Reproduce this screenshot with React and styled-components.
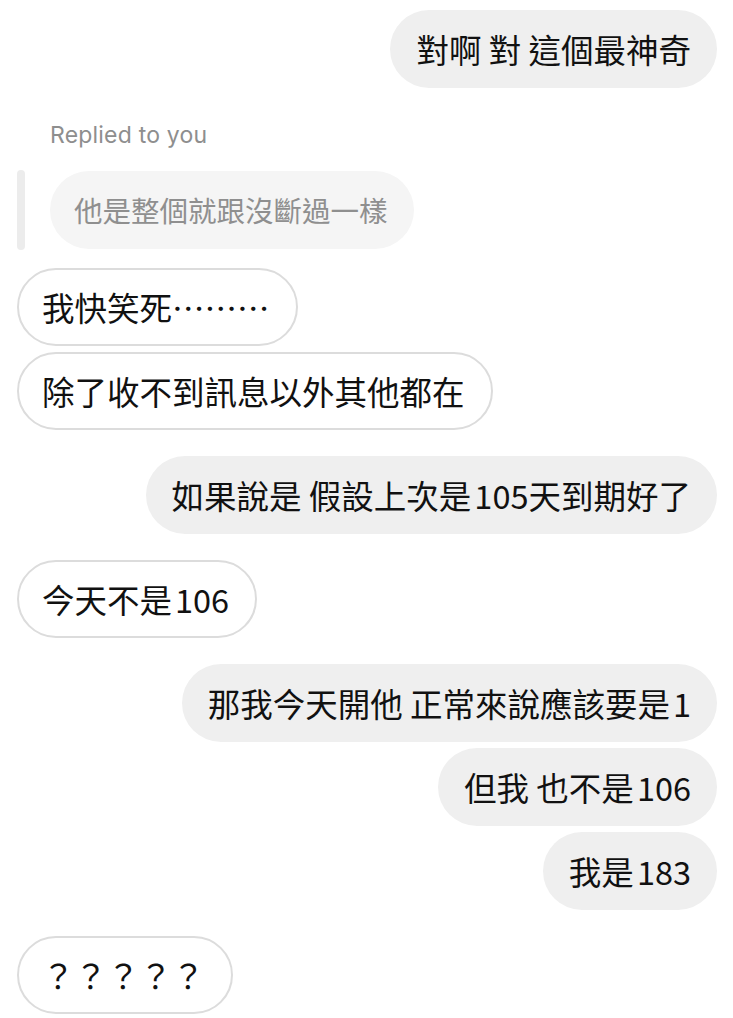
import React from 'react'
import styled, { createGlobalStyle } from 'styled-components'

const GlobalStyle = createGlobalStyle`
  html, body {
    margin: 0;
    padding: 0;
    background: #fff;
  }
  body {
    font-family: "Noto Sans CJK TC", "Noto Sans", sans-serif;
    -webkit-font-smoothing: antialiased;
  }
`

const Thread = styled.main`
  display: flex;
  flex-direction: column;
  gap: 26px;
  width: 733px;
  box-sizing: border-box;
  padding: 10px 16px 0 17px;
`

const Group = styled.section`
  display: flex;
  flex-direction: column;
  align-items: ${p => (p.$mine ? 'flex-end' : 'flex-start')};
  gap: 6px;
`

const Bubble = styled.div`
  display: flex;
  align-items: center;
  box-sizing: border-box;
  height: 78px;
  padding: 0 26px 0 ${p => (p.$mine ? '26px' : '23px')};
  border-radius: 39px;
  background: ${p => (p.$mine ? '#efefef' : '#fff')};
  border: ${p => (p.$mine ? 'none' : '2px solid #dcdcdc')};
  color: #111;
  font-size: 32.5px;
  line-height: 40px;
  white-space: nowrap;
`

const Num = styled.span`
  margin-left: 3px;
`

const ReplyLabel = styled.div`
  margin: 6px 0 0 33px;
  font-family: "Inter", "Liberation Sans", sans-serif;
  font-size: 23px;
  line-height: 30px;
  letter-spacing: 0.2px;
  color: #8e8e8e;
`

const Quote = styled.div`
  display: flex;
  align-items: center;
  gap: 25px;
  margin: 14px 0 12px;
`

const QuoteBar = styled.div`
  width: 8px;
  height: 80px;
  border-radius: 4px;
  background: #ececec;
`

const QuoteBubble = styled.div`
  display: flex;
  align-items: center;
  height: 78px;
  padding: 0 26px 0 24px;
  border-radius: 39px;
  background: #f5f5f5;
  color: #8f8f8f;
  font-size: 28.5px;
  line-height: 36px;
  white-space: nowrap;
`

export default function App() {
  return (
    <>
      <GlobalStyle />
      <Thread>
        <Group $mine>
          <Bubble $mine>對啊 對 這個最神奇</Bubble>
        </Group>
        <Group>
          <ReplyLabel>Replied to you</ReplyLabel>
          <Quote>
            <QuoteBar />
            <QuoteBubble>他是整個就跟沒斷過一樣</QuoteBubble>
          </Quote>
          <Bubble>我快笑死………</Bubble>
          <Bubble>除了收不到訊息以外其他都在</Bubble>
        </Group>
        <Group $mine>
          <Bubble $mine>
            如果說是 假設上次是<Num>105</Num>天到期好了
          </Bubble>
        </Group>
        <Group>
          <Bubble>
            今天不是<Num>106</Num>
          </Bubble>
        </Group>
        <Group $mine>
          <Bubble $mine>
            那我今天開他 正常來說應該要是<Num>1</Num>
          </Bubble>
          <Bubble $mine>
            但我 也不是<Num>106</Num>
          </Bubble>
          <Bubble $mine>
            我是<Num>183</Num>
          </Bubble>
        </Group>
        <Group>
          <Bubble>？？？？？</Bubble>
        </Group>
      </Thread>
    </>
  )
}
